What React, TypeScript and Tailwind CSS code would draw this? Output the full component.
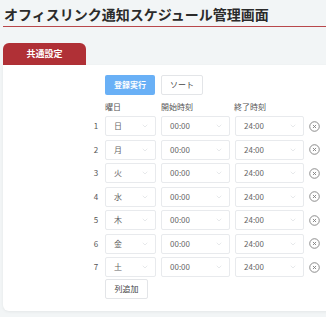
import { ChevronDown } from 'lucide-react';

const days = ['日', '月', '火', '水', '木', '金', '土'];

function Select({ value, width }: { value: string; width: string }) {
  return (
    <div
      className={`${width} h-[20px] flex items-center justify-between pl-[8px] pr-[6px] border border-[#e8eaed] rounded-[2px] bg-white text-[8px] text-[#666]`}
    >
      <span>{value}</span>
      <ChevronDown className="w-[8px] h-[8px] text-[#cfd3d7]" strokeWidth={1.5} />
    </div>
  );
}

function DeleteIcon() {
  return (
    <svg width="11" height="11" viewBox="0 0 12 12" className="text-[#808080]">
      <circle cx="6" cy="6" r="5.2" fill="none" stroke="currentColor" strokeWidth="1" />
      <path d="M4.3 4.3 L7.7 7.7 M7.7 4.3 L4.3 7.7" stroke="currentColor" strokeWidth="1" />
    </svg>
  );
}

export default function App() {
  return (
    <div
      className="w-[326px] h-[317px] overflow-hidden bg-[#f2f5f6] text-[#333]"
      style={{ fontFamily: '"Noto Sans CJK JP", "Noto Sans", sans-serif' }}
    >
      {/* header */}
      <div className="ml-[3px] pt-[5px] pb-[3px] border-b border-[#b8474b]">
        <h1 className="pl-[1px] text-[14px] leading-[18px] font-bold text-[#2b2b2b]">
          オフィスリンク通知スケジュール管理画面
        </h1>
      </div>

      {/* tab */}
      <div className="ml-[3px] mt-[16px] w-[83px] h-[22px] rounded-t-[6px] bg-[#b03036] flex items-center justify-center text-white text-[9px] font-semibold">
        共通設定
      </div>

      {/* card */}
      <div className="ml-[3px] w-[340px] h-[246px] bg-white rounded-bl-[6px] shadow-[0_1px_3px_rgba(0,0,0,0.06)] pt-[10px]">
        <div className="ml-[102px] flex gap-[6px]">
          <button className="w-[50px] h-[20px] rounded-[2px] bg-[#69b0f6] text-white text-[8px] font-semibold">
            登録実行
          </button>
          <button className="w-[42px] h-[20px] rounded-[2px] border border-[#e3e5e8] bg-white text-[#444] text-[8px]">
            ソート
          </button>
        </div>

        <div className="ml-[102px] mt-[6px] h-[12px] flex text-[8px] leading-[12px] text-[#555]">
          <span className="w-[56px]">曜日</span>
          <span className="w-[73px]">開始時刻</span>
          <span>終了時刻</span>
        </div>

        <div className="ml-[87px] mt-[3px] flex flex-col gap-[3.5px]">
          {days.map((d, i) => (
            <div key={d} className="flex items-center h-[20px]">
              <span className="w-[12px] text-center text-[8px] text-[#555]">{i + 1}</span>
              <div className="ml-[3px]">
                <Select value={d} width="w-[51px]" />
              </div>
              <div className="ml-[5px]">
                <Select value="00:00" width="w-[69px]" />
              </div>
              <div className="ml-[5px]">
                <Select value="24:00" width="w-[69px]" />
              </div>
              <div className="ml-[5px] flex items-center">
                <DeleteIcon />
              </div>
            </div>
          ))}
        </div>

        <button className="block ml-[102px] mt-[2px] w-[43px] h-[20px] rounded-[2px] border border-[#e3e5e8] bg-white text-[#444] text-[8px]">
          列追加
        </button>
      </div>
    </div>
  );
}
